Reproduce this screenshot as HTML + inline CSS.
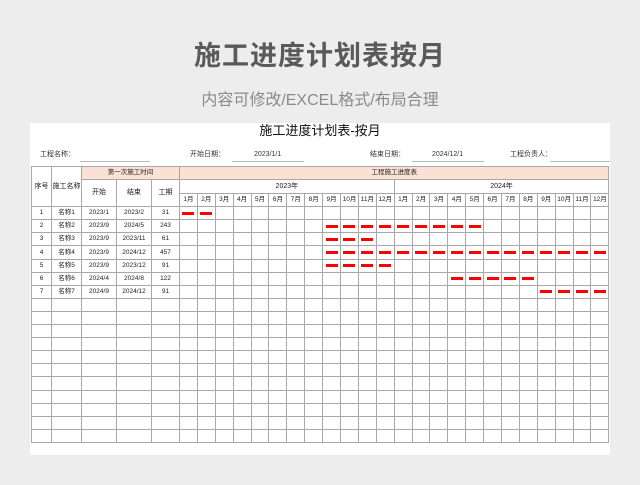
<!DOCTYPE html>
<html><head><meta charset="utf-8"><style>
body{margin:0;width:640px;height:485px;background:#ededed;font-family:"Liberation Sans","Noto Sans CJK SC",sans-serif;position:relative;overflow:hidden}
.t1{position:absolute;top:34px;left:0;width:640px;text-align:center;font-size:27px;color:#5a5a5a;font-weight:bold;letter-spacing:1px}
.t2{position:absolute;top:86px;left:0;width:640px;text-align:center;font-size:16px;color:#8a8a8a}
.card{position:absolute;left:30px;top:123px;width:580px;height:332px;background:#fff}
.ct{position:absolute;top:0;left:0;width:580px;text-align:center;font-size:13px;color:#111;line-height:16px}
.info{position:absolute;top:27px;font-size:7px;color:#333;line-height:9px;height:9px}
.line{position:absolute;top:38px;height:0;border-top:1px solid #bbb}
table{position:absolute;left:1px;top:43px;border-collapse:collapse;table-layout:fixed;width:578px}
td{border:1px solid #a8a8a8;padding:0;font-size:6.5px;text-align:center;color:#222;height:12.1px;line-height:10px;overflow:hidden;white-space:nowrap}
.o{background:#fbe1d4}
.b{display:block;width:12px;height:3px;background:#f00;margin:0 auto}
</style></head><body>
<div class="t1">施工进度计划表按月</div>
<div class="t2">内容可修改/EXCEL格式/布局合理</div>
<div class="card">
<div class="ct">施工进度计划表-按月</div>
<div class="info" style="left:10px">工程名称：</div><div class="line" style="left:50px;width:70px"></div>
<div class="info" style="left:160px">开始日期：</div><div class="line" style="left:202px;width:72px"></div>
<div class="info" style="left:224px">2023/1/1</div>
<div class="info" style="left:340px">结束日期：</div><div class="line" style="left:382px;width:72px"></div>
<div class="info" style="left:402px">2024/12/1</div>
<div class="info" style="left:480px">工程负责人：</div><div class="line" style="left:520px;width:60px"></div>
<table>
<colgroup><col style="width:20px"><col style="width:30px"><col style="width:35px"><col style="width:35px"><col style="width:28px">
<col span="24" style="width:17.9px"></colgroup>
<tr><td rowspan="3" style="font-size:7px">序号</td><td rowspan="3" style="font-size:7px">施工名称</td><td colspan="3" class="o">第一次施工时间</td><td colspan="24" class="o">工程施工进度表</td></tr>
<tr><td rowspan="2" style="font-size:7px">开始</td><td rowspan="2" style="font-size:7px">结束</td><td rowspan="2" style="font-size:7px">工期</td><td colspan="12" style="font-size:7px;height:13px">2023年</td><td colspan="12" style="font-size:7px">2024年</td></tr>
<tr><td>1月</td><td>2月</td><td>3月</td><td>4月</td><td>5月</td><td>6月</td><td>7月</td><td>8月</td><td>9月</td><td>10月</td><td>11月</td><td>12月</td><td>1月</td><td>2月</td><td>3月</td><td>4月</td><td>5月</td><td>6月</td><td>7月</td><td>8月</td><td>9月</td><td>10月</td><td>11月</td><td>12月</td></tr>
<tr><td>1</td><td>名称1</td><td>2023/1</td><td>2023/2</td><td>31</td><td><i class="b"></i></td><td><i class="b"></i></td><td></td><td></td><td></td><td></td><td></td><td></td><td></td><td></td><td></td><td></td><td></td><td></td><td></td><td></td><td></td><td></td><td></td><td></td><td></td><td></td><td></td><td></td></tr>
<tr><td>2</td><td>名称2</td><td>2023/9</td><td>2024/5</td><td>243</td><td></td><td></td><td></td><td></td><td></td><td></td><td></td><td></td><td><i class="b"></i></td><td><i class="b"></i></td><td><i class="b"></i></td><td><i class="b"></i></td><td><i class="b"></i></td><td><i class="b"></i></td><td><i class="b"></i></td><td><i class="b"></i></td><td><i class="b"></i></td><td></td><td></td><td></td><td></td><td></td><td></td><td></td></tr>
<tr><td>3</td><td>名称3</td><td>2023/9</td><td>2023/11</td><td>61</td><td></td><td></td><td></td><td></td><td></td><td></td><td></td><td></td><td><i class="b"></i></td><td><i class="b"></i></td><td><i class="b"></i></td><td></td><td></td><td></td><td></td><td></td><td></td><td></td><td></td><td></td><td></td><td></td><td></td><td></td></tr>
<tr><td>4</td><td>名称4</td><td>2023/9</td><td>2024/12</td><td>457</td><td></td><td></td><td></td><td></td><td></td><td></td><td></td><td></td><td><i class="b"></i></td><td><i class="b"></i></td><td><i class="b"></i></td><td><i class="b"></i></td><td><i class="b"></i></td><td><i class="b"></i></td><td><i class="b"></i></td><td><i class="b"></i></td><td><i class="b"></i></td><td><i class="b"></i></td><td><i class="b"></i></td><td><i class="b"></i></td><td><i class="b"></i></td><td><i class="b"></i></td><td><i class="b"></i></td><td><i class="b"></i></td></tr>
<tr><td>5</td><td>名称5</td><td>2023/9</td><td>2023/12</td><td>91</td><td></td><td></td><td></td><td></td><td></td><td></td><td></td><td></td><td><i class="b"></i></td><td><i class="b"></i></td><td><i class="b"></i></td><td><i class="b"></i></td><td></td><td></td><td></td><td></td><td></td><td></td><td></td><td></td><td></td><td></td><td></td><td></td></tr>
<tr><td>6</td><td>名称6</td><td>2024/4</td><td>2024/8</td><td>122</td><td></td><td></td><td></td><td></td><td></td><td></td><td></td><td></td><td></td><td></td><td></td><td></td><td></td><td></td><td></td><td><i class="b"></i></td><td><i class="b"></i></td><td><i class="b"></i></td><td><i class="b"></i></td><td><i class="b"></i></td><td></td><td></td><td></td><td></td></tr>
<tr><td>7</td><td>名称7</td><td>2024/9</td><td>2024/12</td><td>91</td><td></td><td></td><td></td><td></td><td></td><td></td><td></td><td></td><td></td><td></td><td></td><td></td><td></td><td></td><td></td><td></td><td></td><td></td><td></td><td></td><td><i class="b"></i></td><td><i class="b"></i></td><td><i class="b"></i></td><td><i class="b"></i></td></tr>
<tbody id="e"></tbody>
</table>
</div>
<script>
var h='';for(var r=0;r<11;r++){h+='<tr>';for(var c=0;c<29;c++)h+='<td></td>';h+='</tr>';}document.getElementById('e').innerHTML=h;
</script>
</body></html>
